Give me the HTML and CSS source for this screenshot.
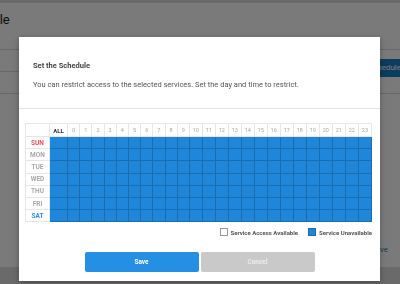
FILE: index.html
```html
<!DOCTYPE html>
<html lang="en">

<head>
    <meta charset="UTF-8">
    <meta name="viewport" content="width=device-width, initial-scale=1.0">
    <title>Schedule</title>
    <link rel="stylesheet" href="styles.css">
</head>

<body>

    <div class="page">
        <div class="topbar"></div>
        <h1 class="page-title">Access Schedule</h1>
        <div class="list-row"></div>
        <div class="list-row">
            <span class="add-btn">Add Schedule</span>
        </div>
        <div class="list-row"></div>
        <div class="page-actions">
            <span class="save-link">Save</span>
        </div>
        <div class="footer"></div>
    </div>

    <div class="backdrop"></div>

    <div class="modal">
        <div class="modal-head">
            <h2 class="modal-title">Set the Schedule</h2>
            <p class="modal-desc">You can restrict access to the selected services. Set the day and time to restrict.</p>
        </div>

        <div class="modal-body">
            <table class="schedule">
                <thead>
                    <tr>
                        <th class="corner"></th>
                        <th class="all">ALL</th>
                        <th class="hr">0</th><th class="hr">1</th><th class="hr">2</th><th class="hr">3</th><th class="hr">4</th><th class="hr">5</th><th class="hr">6</th><th class="hr">7</th><th class="hr">8</th><th class="hr">9</th>
                        <th class="hr wide">10</th><th class="hr wide">11</th><th class="hr wide">12</th><th class="hr wide">13</th><th class="hr wide">14</th><th class="hr wide">15</th><th class="hr wide">16</th><th class="hr wide">17</th><th class="hr wide">18</th><th class="hr wide">19</th><th class="hr wide">20</th><th class="hr wide">21</th><th class="hr wide">22</th><th class="hr wide">23</th>
                    </tr>
                </thead>
                <tbody id="days"></tbody>
            </table>

            <div class="legend">
                <span class="legend-item"><i class="box"></i>Service Access Available</span>
                <span class="legend-item"><i class="box off"></i>Service Unavailable</span>
            </div>

            <div class="actions">
                <button class="btn btn-save">Save</button>
                <button class="btn btn-cancel">Cancel</button>
            </div>
        </div>
    </div>

    <script>
        const days = ['SUN', 'MON', 'TUE', 'WED', 'THU', 'FRI', 'SAT'];
        const body = document.getElementById('days');

        days.forEach(day => {
            let row = '<tr><th class="day ' + day.toLowerCase() + '">' + day + '</th>';
            // ALL column + 24 hours, all blocked
            for (let h = 0; h < 25; h++) {
                row += '<td class="cell off"></td>';
            }
            body.insertAdjacentHTML('beforeend', row + '</tr>');
        });
    </script>

</body>

</html>
```

FILE: styles.css
```css
body {
    margin: 0;
    font-family: Roboto, "Liberation Sans", sans-serif;
    background: #fff;
    overflow: hidden;
}

/* page behind the dialog */
.page {
    height: 284px;
    display: flex;
    flex-direction: column;
}

.topbar {
    height: 3px;
    background: #dcdcdc;
}

.page-title {
    margin: 9px 0 0 -89px;
    font-size: 13px;
    font-weight: 400;
    color: #222;
    line-height: 16px;
}

.list-row {
    height: 21px;
    border-bottom: 1px solid #d8d8d8;
    display: flex;
    justify-content: flex-end;
    align-items: flex-start;
}

.list-row:first-of-type {
    margin-top: 5px;
}

.add-btn {
    margin: 9px -9px 0 0;
    height: 18px;
    line-height: 18px;
    padding: 0 8px;
    background: #1d7dc4;
    color: #fff;
    font-size: 8px;
}

.page-actions {
    margin-top: auto;
    display: flex;
    justify-content: flex-end;
    padding: 0 12px 13px 0;
}

.save-link {
    color: #2a83c8;
    font-size: 8px;
}

.footer {
    height: 17px;
    background: #dedede;
}

.backdrop {
    position: fixed;
    inset: 0;
    background: rgba(0, 0, 0, 0.52);
}

/* dialog */
.modal {
    position: absolute;
    left: 19px;
    top: 37px;
    width: 361px;
    height: 244px;
    background: #fff;
    box-shadow: 0 2px 6px rgba(0, 0, 0, 0.3);
}

.modal-head {
    padding: 24px 14px 0;
    height: 47px;
    border-bottom: 1px solid #e2e2e2;
}

.modal-title {
    margin: 0;
    font-size: 7.5px;
    font-weight: 700;
    color: #444;
    line-height: 10px;
}

.modal-desc {
    margin: 9px 0 0;
    font-size: 7.5px;
    color: #555;
    line-height: 10px;
}

.modal-body {
    padding: 14px 8px 0 6px;
}

.schedule {
    border-collapse: collapse;
    table-layout: fixed;
    width: 347px;
}

.schedule th {
    border: 1px solid #e6e6e6;
    font-size: 6.5px;
    font-weight: 700;
    color: #a8a8a8;
    padding: 0;
    text-align: center;
}

.schedule thead th {
    height: 12px;
    font-size: 5.5px;
    font-weight: 400;
}

.schedule .corner { width: 23px; }
.schedule .all { width: 17px; font-size: 6px; font-weight: 700; color: #333; }
.schedule .hr { width: 11.2px; }
.schedule .hr.wide { width: 12px; }

.schedule tbody tr {
    height: 12.2px;
}

.day.sun { color: #e8505b; }
.day.sat { color: #2f8de0; }

.cell {
    border: 1px solid #1b6db2;
    padding: 0;
}

.cell.off {
    background: #1f86d9;
}

.legend {
    display: flex;
    justify-content: flex-end;
    gap: 10px;
    margin-top: 6px;
    font-size: 6px;
    font-weight: 700;
    color: #555;
}

.legend-item {
    display: flex;
    align-items: center;
    gap: 3px;
}

.box {
    width: 6px;
    height: 6px;
    border: 1px solid #999;
    background: #fff;
}

.box.off {
    background: #1f86d9;
    border-color: #1b6db2;
}

.actions {
    display: flex;
    justify-content: center;
    gap: 2px;
    margin-top: 16px;
    padding-left: 2px;
}

.btn {
    width: 114px;
    height: 20px;
    border: 0;
    border-radius: 2px;
    font-family: inherit;
    font-size: 6.5px;
    font-weight: 700;
    color: #fff;
}

.btn-save {
    background: #258fe3;
}

.btn-cancel {
    background: #c9c9c9;
    color: #ececec;
}
```
